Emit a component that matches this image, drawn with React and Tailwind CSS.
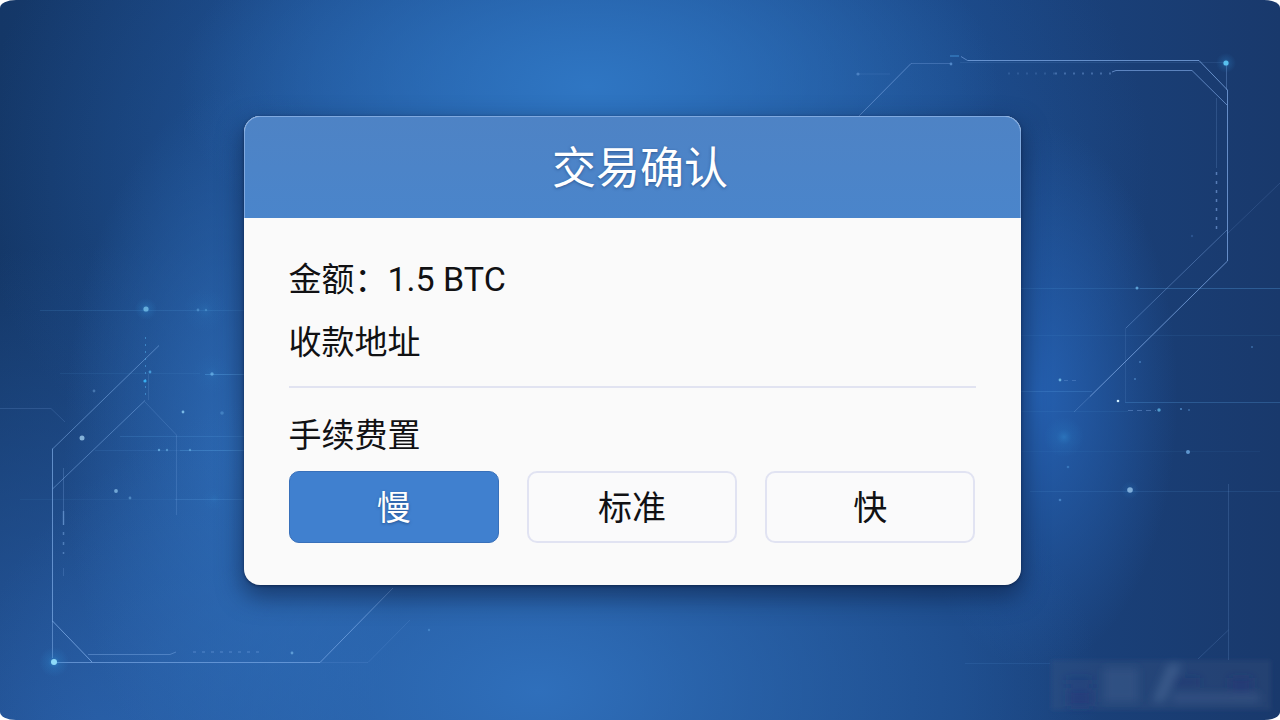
import { useState } from "react";

const FEES = ["慢", "标准", "快"];

const SCAN_LINES = [
  [40, 310, 244, 0.16], [60, 373, 200, 0.1], [205, 374, 244, 0.4], [120, 436, 244, 0.2],
  [95, 450, 180, 0.13], [180, 450, 244, 0.35], [20, 499, 175, 0.08], [175, 499, 244, 0.24],
  [1021, 288, 1140, 0.16], [1140, 288, 1280, 0.32], [1021, 335, 1280, 0.1], [1021, 391, 1092, 0.24],
  [1125, 402, 1280, 0.28], [1021, 411, 1128, 0.1], [1021, 451, 1260, 0.07], [1030, 491, 1280, 0.14],
  [965, 663, 1050, 0.13],
];

const STARS = [
  [1226, 63, 2.6, "#58c0ee", 1], [54, 662, 3, "#8fdaf8", 1], [146, 309, 2.6, "#6cb4e0", 0.9],
  [82, 438, 2.5, "#96c4e8", 0.85], [1130, 490, 2.8, "#8dbbe4", 0.85], [1188, 452, 2, "#6ba6de", 0.85],
  [1137, 288, 1.5, "#6cb5e8", 0.8], [1159, 410, 1.7, "#5fb4e4", 0.8], [1118, 401, 1.3, "#d0efff", 1],
  [1060, 380, 1.4, "#7cc6ef", 0.8], [116, 491, 1.9, "#80b6e2", 0.85], [130, 498, 1.4, "#5e9ad2", 0.7],
  [212, 374, 1.7, "#6fb9ed", 0.7], [183, 412, 1.4, "#8ed0f5", 0.8], [222, 413, 1.8, "#5a9eda", 0.55],
  [94, 391, 1.4, "#5f92c8", 0.6], [145, 381, 1.6, "#38aef0", 1], [150, 372, 1.4, "#4da9e6", 0.8],
  [198, 310, 1.4, "#5b9fd8", 0.6], [206, 310, 1.2, "#5b9fd8", 0.5], [858, 74, 1.6, "#5b90d0", 0.7],
  [951, 64, 1.4, "#5c95d5", 0.8], [159, 450, 1.2, "#6db4e8", 0.8], [167, 450, 1.2, "#6db4e8", 0.6],
  [190, 450, 1.2, "#6db4e8", 0.6], [292, 653, 1.4, "#6aa9df", 0.8], [1060, 500, 1.3, "#5c9cdd", 0.6],
  [1140, 362, 1, "#5c9cdd", 0.6], [1135, 379, 1, "#5c9cdd", 0.6], [1252, 347, 1, "#5c9cdd", 0.5],
  [1181, 409, 1.1, "#5c9cdd", 0.7], [1189, 410, 1, "#5c9cdd", 0.5], [1068, 467, 1.3, "#4b94d6", 0.5],
  [429, 630, 1.2, "#5b9fe0", 0.5], [1192, 236, 1.2, "#3d6cae", 0.5],
];

const HALOS = [
  [1226, 63, 10, 0.5], [54, 662, 15, 0.55], [146, 309, 11, 0.45], [1130, 490, 9, 0.3],
  [1064, 437, 20, 0.35], [205, 310, 22, 0.15], [212, 374, 20, 0.12], [214, 499, 12, 0.12],
];

function Circuit() {
  return (
    <svg
      className="absolute inset-0 h-full w-full"
      viewBox="0 0 1280 720"
      preserveAspectRatio="xMidYMid slice"
      aria-hidden="true"
      fill="none"
    >
      <defs>
        <radialGradient id="halo">
          <stop offset="0" stopColor="#3ba4e6" />
          <stop offset="0.4" stopColor="#2f8bd2" stopOpacity="0.4" />
          <stop offset="1" stopColor="#2f8bd2" stopOpacity="0" />
        </radialGradient>
        <filter id="smudge" x="-20%" y="-40%" width="140%" height="180%">
          <feGaussianBlur stdDeviation="4" />
        </filter>
        <filter id="edge" x="-5%" y="-10%" width="110%" height="120%">
          <feGaussianBlur stdDeviation="2" />
        </filter>
      </defs>

      {SCAN_LINES.map(([x1, y, x2, opacity]) => (
        <path key={`${x1}-${y}`} d={`M${x1} ${y + 0.5}H${x2}`} stroke="#5aa5e6" strokeOpacity={opacity} />
      ))}

      <g stroke="#7fa9e6">
        <path d="M967.5 60.5H1199L1227.5 90V261L1090 396.5" strokeOpacity="0.75" />
        <path d="M1090 396.5L1074 412" strokeOpacity="0.3" />
        <path d="M961 56.5L967.5 60.5" strokeOpacity="0.6" />
        <path d="M950 56H959" stroke="#479be2" strokeOpacity="0.8" />
        <path d="M858 117L911 63.5" strokeOpacity="0.55" />
        <path d="M911 63.5H950" strokeOpacity="0.32" />
        <path d="M960 62.5H1226" strokeOpacity="0.12" />
        <path d="M1112 72L1116 70.5H1192L1227 105" strokeOpacity="0.65" />
        <path d="M1226.5 63V90" strokeOpacity="0.35" />
        <path d="M1008 73.5H1055" strokeOpacity="0.2" strokeWidth="2" strokeDasharray="2 7" />
        <path d="M1055 73.5H1112" strokeOpacity="0.4" strokeWidth="2" strokeDasharray="2 7" />
        <path d="M1216.5 98V168" strokeOpacity="0.2" />
        <path d="M1216.5 172V230" strokeOpacity="0.6" strokeWidth="1.5" strokeDasharray="3 6" />
        <path d="M1280 183L1227 234" strokeOpacity="0.18" />
        <path d="M1227 230L1126 328" strokeOpacity="0.4" />
        <path d="M1125.5 328V402" strokeOpacity="0.14" />
        <path d="M858 74H890" strokeOpacity="0.15" />
        <path d="M1128 410.5H1156" strokeOpacity="0.4" strokeDasharray="5 4" />
        <path d="M1064 380.5H1080" strokeOpacity="0.3" strokeDasharray="4 4" />
        <path d="M1228.5 484V630L1198 659M1228.5 630V660" strokeOpacity="0.2" />
      </g>

      <g stroke="#86b3ee">
        <path d="M52.5 658V449L159 345.5" strokeOpacity="0.5" />
        <path d="M52.5 448V622" strokeOpacity="0.3" />
        <path d="M52.5 489L145 400.5" strokeOpacity="0.45" />
        <path d="M145 402L176.5 435V515" strokeOpacity="0.2" />
        <path d="M145.5 337V398" stroke="#56b6f4" strokeOpacity="0.5" strokeDasharray="2 5" />
        <path d="M148.5 374V400" strokeOpacity="0.16" />
        <path d="M0 408.5H51L65 422" strokeOpacity="0.18" />
        <path d="M63.5 468V525" strokeOpacity="0.25" />
        <path d="M63.5 511V554" strokeOpacity="0.45" strokeWidth="1.5" strokeDasharray="14 7 3 7 3 7" />
        <path d="M63.5 568V576" strokeOpacity="0.2" />
        <path d="M52.5 621L92 662" strokeOpacity="0.7" />
        <path d="M56 662.5H320L393 588" strokeOpacity="0.6" />
        <path d="M88 654.5H170L176 652" strokeOpacity="0.4" />
        <path d="M193 652H260" strokeOpacity="0.3" strokeWidth="1.5" strokeDasharray="3 6" />
        <path d="M320 662.5H368L410 620" strokeOpacity="0.14" />
      </g>

      {HALOS.map(([cx, cy, r, opacity]) => (
        <circle key={`${cx}-${cy}`} cx={cx} cy={cy} r={r} fill="url(#halo)" opacity={opacity} />
      ))}
      {STARS.map(([cx, cy, r, fill, opacity]) => (
        <circle key={`${cx}-${cy}`} cx={cx} cy={cy} r={r} fill={fill} opacity={opacity} />
      ))}

      <rect x="1051" y="660" width="220" height="50" fill="#4a5f88" fillOpacity="0.2" filter="url(#edge)" />
      <g filter="url(#smudge)">
        <rect x="1066" y="678" width="26" height="6" fill="#1e2f78" fillOpacity="0.4" />
        <rect x="1068" y="690" width="24" height="16" fill="#1e2f78" fillOpacity="0.5" />
        <rect x="1104" y="668" width="34" height="34" fill="#46648f" fillOpacity="0.35" />
        <path d="M1168 664L1152 702H1164L1182 664Z" fill="#5877a6" fillOpacity="0.4" />
        <rect x="1172" y="678" width="28" height="8" fill="#1e2f70" fillOpacity="0.4" />
        <rect x="1172" y="694" width="88" height="8" fill="#4c6a9c" fillOpacity="0.35" />
        <rect x="1230" y="678" width="22" height="14" fill="#1e2f78" fillOpacity="0.5" />
      </g>
    </svg>
  );
}

export default function App() {
  const [fee, setFee] = useState("慢");

  return (
    <div className="min-h-screen bg-white">
      <main className="relative flex min-h-screen items-center justify-center overflow-hidden rounded-[16px/8px] bg-[#1a4581] bg-[radial-gradient(ellipse_32%_30%_at_46%_12%,#2f76c3_0%,#2f76c300_100%),radial-gradient(ellipse_44%_48%_at_42%_96%,#2f6fbb_0%,#2f6fbb00_100%),radial-gradient(ellipse_14%_50%_at_19%_62%,#2c68b2_0%,#2c68b200_100%),radial-gradient(ellipse_11%_38%_at_81%_55%,#2560b0_0%,#2560b000_100%),radial-gradient(ellipse_46%_60%_at_44%_24%,#245fa9_0%,#245fa900_100%),radial-gradient(ellipse_46%_70%_at_8%_104%,#275ba3_0%,#275ba300_100%),linear-gradient(to_right,#143767_0%,#1a4480_25%,#1a4582_75%,#19396c_100%)] pt-4 pr-8 pb-9 pl-4 font-[Roboto,'Noto_Sans_CJK_SC',sans-serif]">
        <Circuit />

        <section
          aria-labelledby="dialog-title"
          className="relative w-full max-w-[777px] rounded-2xl bg-[#fafafa] shadow-[0_10px_24px_2px_rgba(12,30,66,0.6),0_1px_3px_rgba(12,30,66,0.7)]"
        >
          <header className="flex h-[102px] items-center justify-center rounded-t-2xl border border-b-0 border-[#7fa9e0] bg-linear-to-b from-[#4e83c5] to-[#4a85cb] pt-1 pl-4">
            <h1
              id="dialog-title"
              className="text-[44px] leading-[56px] text-white [text-shadow:0_1px_3px_rgba(20,50,100,0.5)]"
            >
              交易确认
            </h1>
          </header>

          <div className="px-[45px] pt-[38px] pb-[42px] text-[33px] leading-[48px] text-[#111113]">
            <div className="flex flex-col gap-[15px] border-b-2 border-[#e1e3f1] pb-[19px]">
              <p>
                金额：<span className="text-[34px] leading-none">1.5 BTC</span>
              </p>
              <p>收款地址</p>
            </div>

            <h2 id="fee-label" className="mt-6">
              手续费置
            </h2>
            <div
              role="group"
              aria-labelledby="fee-label"
              className="mt-[11px] grid grid-cols-3 gap-7 text-[34px]"
            >
              {FEES.map((name) => (
                <button
                  key={name}
                  type="button"
                  aria-pressed={fee === name}
                  onClick={() => setFee(name)}
                  className={
                    fee === name
                      ? "h-[72px] rounded-[10px] border border-[#3870ba] bg-[#4080cf] pt-[2px] text-white [text-shadow:0_1px_3px_rgba(20,50,100,0.6)]"
                      : "h-[72px] rounded-[10px] border-2 border-[#e1e3f2] bg-[#fafafb] pt-[2px]"
                  }
                >
                  {name}
                </button>
              ))}
            </div>
          </div>
        </section>
      </main>
    </div>
  );
}
